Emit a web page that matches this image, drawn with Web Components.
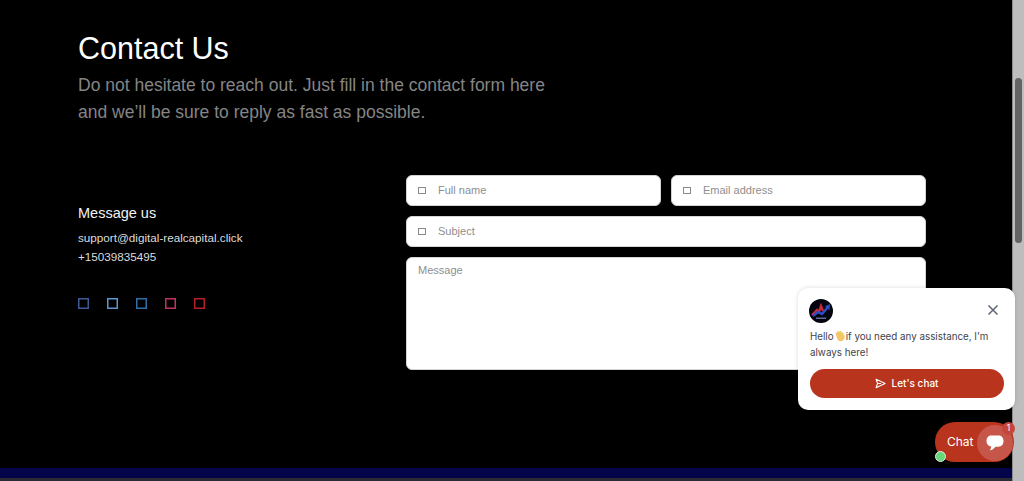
<!DOCTYPE html>
<html><head><meta charset="utf-8"><style>
html,body{margin:0;padding:0;height:481px;overflow:hidden;background:#000;font-family:"Liberation Sans",Arial,sans-serif}
</style></head><body>
<contact-page></contact-page>
<script>
const def=(name,html,setup)=>customElements.define(name,class extends HTMLElement{
  constructor(){super();this.attachShadow({mode:'open'}).innerHTML=typeof html==='function'?html(this):html;}
  connectedCallback(){ if(setup) setup(this);}
});
def('contact-header',`<style>
:host{display:block}
h1{margin:0;font:400 30.5px/36px "Liberation Sans",Arial,sans-serif;color:#fff}
p{margin:5.5px 0 0;font:400 17.5px/27px "Liberation Sans",Arial,sans-serif;color:#858585;width:480px}
</style><h1>Contact Us</h1><p>Do not hesitate to reach out. Just fill in the contact form here and we’ll be sure to reply as fast as possible.</p>`);
def('social-icon',`<style>
:host{display:block;width:11px;height:11px}
svg{display:block;width:11px;height:11px}
</style><svg viewBox="0 0 11 11"><rect x=".75" y=".75" width="9.5" height="9.5" fill="none" stroke="currentColor" stroke-width="1.5"/></svg>`);
def('contact-info',`<style>
:host{display:block;width:328px;box-sizing:border-box;padding-top:29px;color:#e6e6e6}
h2{margin:0;font:400 14.5px/18px "Liberation Sans",Arial,sans-serif;color:#f2f2f2}
.l{font:400 11.7px/19px "Liberation Sans",Arial,sans-serif;color:#dcdcdc}
.mail{margin-top:6px}
.icons{display:flex;gap:18px;margin-top:32px}
</style><h2>Message us</h2><div class="l mail">support@digital-realcapital.click</div><div class="l">+15039835495</div>
<div class="icons">
<social-icon style="color:#3f5a94"></social-icon><social-icon style="color:#5b97cf"></social-icon><social-icon style="color:#2f6fa8"></social-icon><social-icon style="color:#c0335f"></social-icon><social-icon style="color:#b3202a"></social-icon>
</div>`);
def('form-field',(el)=>`<style>
:host{display:flex;align-items:center;box-sizing:border-box;height:31px;background:#fff;border:1px solid #d4d4d4;border-radius:6px;padding:0 11px;font:400 11px/16px "Liberation Sans",Arial,sans-serif;color:#8e8e8e;min-width:0}
:host([area]){height:113px;align-items:flex-start;padding:4px 11px}
i{display:block;width:8px;height:7px;box-sizing:border-box;border:1px solid #8a8a8a;margin-right:12px;flex:none}
</style>${el.hasAttribute('area')?'':'<i></i>'}<slot></slot>`);
def('contact-form',`<style>
:host{display:flex;flex-direction:column;gap:10px;width:520px}
.r{display:flex;gap:10px}.r form-field{flex:1}
</style><div class="r"><form-field>Full name</form-field><form-field>Email address</form-field></div>
<form-field>Subject</form-field><form-field area>Message</form-field>`);
def('fake-scrollbar',`<style>
:host{display:block;width:12px;flex:none;box-sizing:border-box;background:#bdbdbd;border-left:1px solid #8c8c8c;padding:78px 2px 0 2px}
div{width:7px;height:165px;border-radius:4px;background:#636363}
</style><div></div>`);
def('chat-card',`<style>
:host{position:absolute;left:798px;top:288px;width:217px;height:122px;box-sizing:border-box;background:#fff;border-radius:10px;padding:11px 11px 12px 12px;font:400 9.8px/16px Inter,"Liberation Sans",sans-serif;color:#40444b;display:flex;flex-direction:column;box-shadow:0 0 4px rgba(0,0,0,.15)}
.top{display:flex;justify-content:space-between;align-items:center;height:24px}
.av{width:24px;height:24px;display:block;margin-left:-1px}
.x{width:12px;height:12px;margin:-2px 5px 0 0;display:block}
.msg{margin-top:6px;height:32px;width:190px}
.msg svg{width:12px;height:12px;vertical-align:-2px}
button{all:unset;box-sizing:border-box;margin-top:8px;height:29px;width:194px;margin-left:-.5px;border-radius:15px;background:#b8341d;color:#fff;font:500 10px/29px Inter,"Liberation Sans",sans-serif;display:flex;align-items:center;justify-content:center;gap:6px}
button svg{width:11px;height:11px}
</style>
<div class="top">
<svg class="av" viewBox="0 0 24 24"><circle cx="12" cy="12" r="12" fill="#050510"/><path d="M3 16 L8 11 L10 13 L12 7 L14 12" fill="none" stroke="#c62a3a" stroke-width="2.4"/><path d="M4 17 L9 13 L13 15 L19 8" fill="none" stroke="#2b50c8" stroke-width="2.4"/><path d="M21 5 L20.5 11 L16 7.5Z" fill="#2b50c8"/><rect x="7" y="18.5" width="10" height="1.5" fill="#5a6a9a"/></svg>
<svg class="x" viewBox="0 0 12 12"><path d="M1.5 1.5 L10.5 10.5 M10.5 1.5 L1.5 10.5" stroke="#5d6675" stroke-width="1.5" fill="none"/></svg>
</div>
<div class="msg"><div>Hello<svg viewBox="0 0 12 13"><path d="M2 6 L1 3.5 C1 2.5 2.3 2.5 2.8 3.5 L3 2 C3.4 .8 4.6 1 4.8 2 L6 1.2 C7 .8 7.6 1.6 7.3 2.6 L9 2.6 C10 3 9.8 4 9.6 4.6 L11 6 C11.6 9.5 9.5 12.5 6.5 12.2 C3.5 12 2.5 9 2 6Z" fill="#f4c766"/></svg>if you need any assistance, I'm</div><div>always here!</div></div>
<button><svg viewBox="0 0 12 12"><path d="M1.2 1.4 L11 6 L1.2 10.6 L2.8 6Z M2.8 6 H6.5" fill="none" stroke="#fff" stroke-width="1.2" stroke-linejoin="round"/></svg><span>Let's chat</span></button>`);
def('chat-launcher',`<style>
:host{position:absolute;left:935px;top:422px;width:79px;height:40px;border-radius:20px;background:#b8341d;color:#fff;font:400 12px/40px Inter,"Liberation Sans",sans-serif;padding-left:12px;box-sizing:border-box}
.halo{position:absolute;left:42px;top:3px;width:36px;height:36px;border-radius:50%;background:#c6564a}
svg{position:absolute;left:51px;top:13px;width:18px;height:16px}
.badge{position:absolute;left:67px;top:0;width:13px;height:13px;border-radius:50%;background:#c6453a;font:400 8.5px/13px Inter,sans-serif;text-align:center}
.dot{position:absolute;left:0;top:28.5px;width:9px;height:9px;border-radius:50%;background:#67d77a;border:1.5px solid #e9e9e9}
</style><span>Chat</span><div class="halo"></div>
<svg viewBox="0 0 18 16"><path d="M5.5 .5 H12.5 C15.5 .5 17.5 2.5 17.5 6 C17.5 9.5 15.5 11.7 12.5 11.7 H9.5 C8 13.5 6 15 3.8 15.5 C4.7 14.5 5.2 13 5.2 11.6 C2.4 11.2 .5 9.2 .5 6 C.5 2.5 2.5 .5 5.5 .5Z" fill="#fff"/></svg>
<div class="badge">1</div><div class="dot"></div>`);
def('contact-page',`<style>
:host{display:flex;width:1024px;height:481px;position:relative;background:#000}
.main{flex:1;display:flex;flex-direction:column;min-width:0}
.sec{flex:1;box-sizing:border-box;padding:30px 86px 0 78px;background:#000}
.row{display:flex;margin-top:49px}
.band{height:10px;background:#03044a;flex:none}
.strip{height:3px;background:#2a2a33;flex:none}
</style>
<div class="main"><div class="sec"><contact-header></contact-header><div class="row"><contact-info></contact-info><contact-form></contact-form></div></div>
<div class="band"></div><div class="strip"></div></div>
<fake-scrollbar></fake-scrollbar>
<chat-card></chat-card><chat-launcher></chat-launcher>`);
</script>
</body></html>
